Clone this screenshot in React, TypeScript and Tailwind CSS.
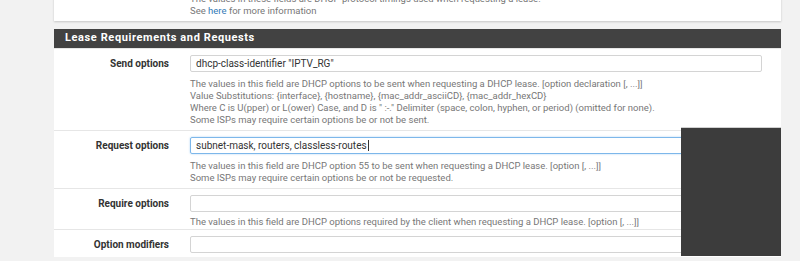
const font = { fontFamily: 'Roboto, "Liberation Sans", sans-serif' };

type Row = {
  label: string;
  value?: string;
  focused?: boolean;
  tight?: boolean;
  help?: string[];
};

const rows: Row[] = [
  {
    label: 'Send options',
    value: 'dhcp-class-identifier "IPTV_RG"',
    help: [
      'The values in this field are DHCP options to be sent when requesting a DHCP lease. [option declaration [, ...]]',
      'Value Substitutions: {interface}, {hostname}, {mac_addr_asciiCD}, {mac_addr_hexCD}',
      'Where C is U(pper) or L(ower) Case, and D is " :-." Delimiter (space, colon, hyphen, or period) (omitted for none).',
      'Some ISPs may require certain options be or not be sent.',
    ],
  },
  {
    label: 'Request options',
    value: 'subnet-mask, routers, classless-routes',
    focused: true,
    help: [
      'The values in this field are DHCP option 55 to be sent when requesting a DHCP lease. [option [, ...]]',
      'Some ISPs may require certain options be or not be requested.',
    ],
  },
  {
    label: 'Require options',
    tight: true,
    help: ['The values in this field are DHCP options required by the client when requesting a DHCP lease. [option [, ...]]'],
  },
  { label: 'Option modifiers' },
];

function FormRow({ row }: { row: Row }) {
  return (
    <div className={row.tight ? 'flex border-t border-[#e6e6e6] pt-[6px] pb-[1px]' : 'flex border-t border-[#e6e6e6] pt-[6px] pb-[4px]'}>
      <div className="flex h-[17px] w-[127px] shrink-0 items-center justify-end pr-[12px] text-[10px] font-bold text-[#333]">
        {row.label}
      </div>
      <div className="ml-[9px] w-[572px]">
        <div
          className={
            row.focused
              ? 'flex h-[17px] items-center rounded-[2px] border border-[#7db7ea] px-[5px] text-[10px] text-[#333] shadow-[0_0_2px_rgba(102,175,233,0.6)]'
              : 'flex h-[17px] items-center rounded-[2px] border border-[#d4d4d4] px-[5px] text-[10px] text-[#333]'
          }
        >
          {row.value}
          {row.focused && <span className="ml-px h-[11px] w-px bg-[#333]" />}
        </div>
        {row.help && (
          <div className={row.tight ? 'mt-[4px] text-[9.5px] leading-[12px] text-[#777]' : 'mt-[6px] text-[9.5px] leading-[12px] text-[#777]'}>
            {row.help.map((line) => (
              <div key={line}>{line}</div>
            ))}
          </div>
        )}
      </div>
    </div>
  );
}

export default function App() {
  return (
    <div className="relative h-[261px] overflow-hidden bg-[#f2f2f2]" style={font}>
      <div className="ml-[54px] w-[727px]">
        <div className="-mt-[7px] bg-white pb-[4px] pl-[136px] text-[9.5px] leading-[12px] text-[#777] shadow-[0_1px_2px_rgba(0,0,0,0.18)]">
          <div>The values in these fields are DHCP protocol timings used when requesting a lease.</div>
          <div>
            See <span className="text-[#337ab7]">here</span> for more information
          </div>
        </div>

        <div className="mt-[8px] bg-white">
          <div className="flex h-[19px] items-center bg-[#424242] pl-[11px] text-[11px] font-bold tracking-[0.6px] text-white">
            Lease Requirements and Requests
          </div>
          {rows.map((row) => (
            <FormRow key={row.label} row={row} />
          ))}
        </div>
      </div>

      <div className="absolute top-[127px] left-[681px] h-[129px] w-[100px] border-t border-[#d0d0d0] bg-[#3c3c3c]" />
    </div>
  );
}
